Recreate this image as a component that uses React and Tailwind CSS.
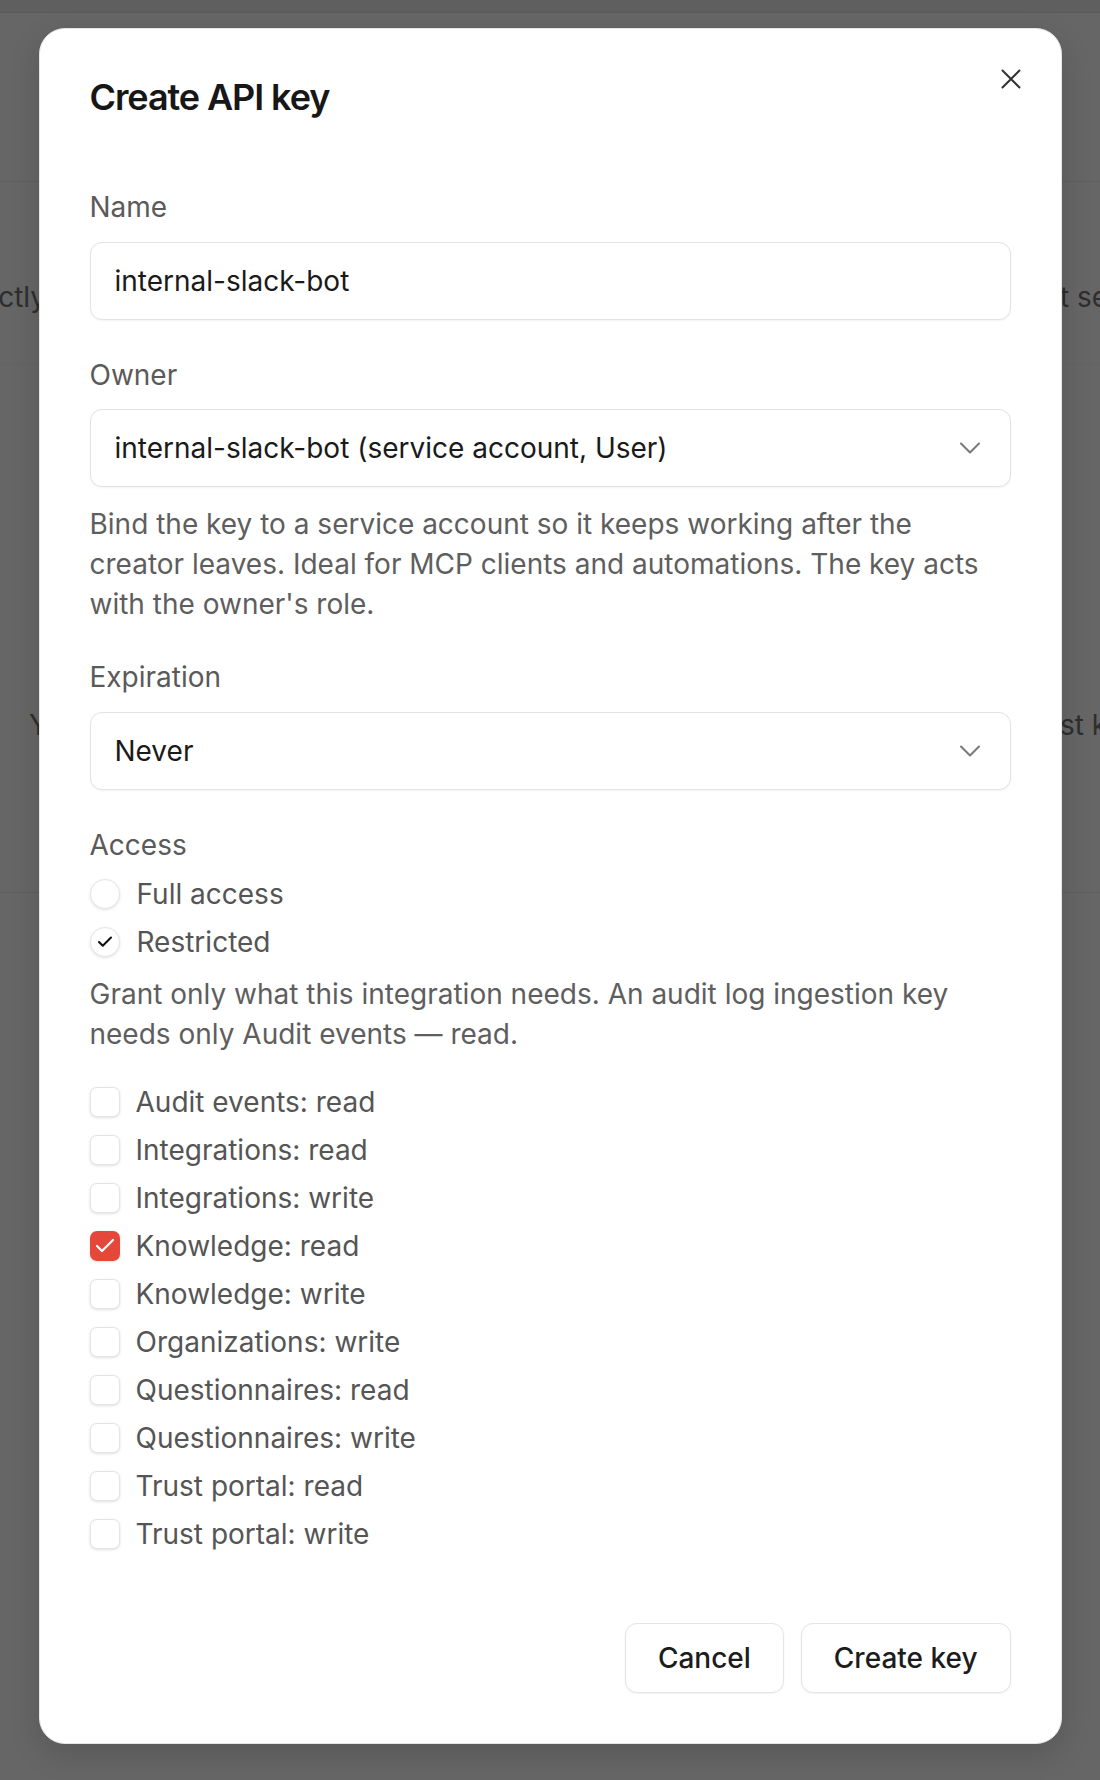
import React from "react";

const permissions = [
	{ id: "audit-read", label: "Audit events: read", checked: false },
	{ id: "integrations-read", label: "Integrations: read", checked: false },
	{ id: "integrations-write", label: "Integrations: write", checked: false },
	{ id: "knowledge-read", label: "Knowledge: read", checked: true },
	{ id: "knowledge-write", label: "Knowledge: write", checked: false },
	{ id: "organizations-write", label: "Organizations: write", checked: false },
	{ id: "questionnaires-read", label: "Questionnaires: read", checked: false },
	{ id: "questionnaires-write", label: "Questionnaires: write", checked: false },
	{ id: "trust-read", label: "Trust portal: read", checked: false },
	{ id: "trust-write", label: "Trust portal: write", checked: false },
];

const Chevron = () => (
	<svg width="36" height="36" viewBox="0 0 24 24" fill="none" stroke="#7a7a7a" strokeWidth="1.4" strokeLinecap="round" strokeLinejoin="round">
		<path d="m6 9 6 6 6-6" />
	</svg>
);

const Check = ({ size, color, width }) => (
	<svg width={size} height={size} viewBox="0 0 24 24" fill="none" stroke={color} strokeWidth={width} strokeLinecap="round" strokeLinejoin="round">
		<path d="M20 6 9 17l-5-5" />
	</svg>
);

const Label = ({ children, className = "" }) => (
	<div className={`text-[28px] leading-[40px] text-[#5a5a5a] ${className}`}>{children}</div>
);

const Field = ({ children, select, className = "" }) => (
	<div className={`flex h-[78px] items-center justify-between rounded-[12px] border border-[#e3e3e3] bg-white pl-[24px] pr-[22px] shadow-[0_1px_2px_rgba(0,0,0,0.05)] ${className}`}>
		<span className="text-[28px] leading-[40px] text-[#1a1a1a]">{children}</span>
		{select && <Chevron />}
	</div>
);

const App = () => {
	return (
		<div className="relative h-[1780px] overflow-hidden bg-[#666666] font-[family-name:Inter,sans-serif]">
			{/* page behind the dialog, dimmed */}
			<div className="h-[13px] border-b border-[#5a5a5a] bg-[#5f5f5f]"></div>
			<div className="h-[169px] border-b border-[#5f5f5f]"></div>
			<div className="flex h-[183px] justify-between border-b border-[#636363] pt-[95px] text-[28px] leading-[40px] text-[#2e2e2e]">
				<div className="flex w-[46px] justify-end overflow-hidden whitespace-nowrap">
					<span className="shrink-0">Install it correctly</span>
				</div>
				<div className="w-[40px] overflow-hidden whitespace-nowrap">
					<span>t set</span>
				</div>
			</div>
			<div className="flex h-[528px] justify-between border-b border-[#5f5f5f] pt-[340px] text-[28px] leading-[40px] text-[#2e2e2e]">
				<div className="w-[80px] overflow-hidden whitespace-nowrap pl-[29px]">
					<span>Your</span>
				</div>
				<div className="w-[40px] overflow-hidden whitespace-nowrap">
					<span>st key</span>
				</div>
			</div>

			{/* dialog */}
			<div className="absolute inset-0 flex justify-center pt-[28px]">
				<div className="relative h-fit w-[1023px] rounded-[26px] border border-[#e6e6e6] bg-white p-[50px] shadow-[0_10px_30px_rgba(0,0,0,0.15)]">
					<h2 className="text-[36px] font-semibold leading-[36px] tracking-[-0.03em] text-[#171717]">
						Create API key
					</h2>
					<button className="absolute right-[40px] top-[40px] flex h-[20px] w-[20px] items-center justify-center">
						<svg width="20" height="20" viewBox="0 0 20 20" fill="none" stroke="#333333" strokeWidth="2" strokeLinecap="round">
							<path d="M1.5 1.5 18.5 18.5M18.5 1.5 1.5 18.5" />
						</svg>
					</button>

					<div className="mt-[72px] flex flex-col">
						<Label>Name</Label>
						<Field className="mt-[15px]">internal-slack-bot</Field>

						<Label className="mt-[35px]">Owner</Label>
						<Field select className="mt-[14px]">
							internal-slack-bot (service account, User)
						</Field>
						<p className="mt-[17px] text-[28px] leading-[40px] text-[#5e5e5e]">
							Bind the key to a service account so it keeps working after the
							creator leaves. Ideal for MCP clients and automations. The key acts
							with the owner's role.
						</p>

						<Label className="mt-[33px]">Expiration</Label>
						<Field select className="mt-[15px]">Never</Field>

						<Label className="mt-[35px]">Access</Label>
						<div className="mt-[9px] flex flex-col gap-[8px]">
							<div className="flex h-[40px] items-center gap-[17px]">
								<div className="h-[30px] w-[30px] rounded-full border border-[#e6e6e6] bg-white shadow-[0_1px_3px_rgba(0,0,0,0.12)]"></div>
								<span className="text-[28px] leading-[40px] text-[#555555]">Full access</span>
							</div>
							<div className="flex h-[40px] items-center gap-[17px]">
								<div className="flex h-[30px] w-[30px] items-center justify-center rounded-full border border-[#e6e6e6] bg-white shadow-[0_1px_3px_rgba(0,0,0,0.12)]">
									<Check size={18} color="#111111" width={2.8} />
								</div>
								<span className="text-[28px] leading-[40px] text-[#555555]">Restricted</span>
							</div>
						</div>
						<p className="mt-[12px] text-[28px] leading-[40px] text-[#5e5e5e]">
							Grant only what this integration needs. An audit log ingestion key
							needs only Audit events — read.
						</p>

						<div className="mt-[28px] flex flex-col gap-[8px]">
							{permissions.map((perm) => (
								<div key={perm.id} className="flex h-[40px] items-center gap-[16px]">
									{perm.checked ? (
										<div className="flex h-[30px] w-[30px] items-center justify-center rounded-[7px] bg-[#e5483b] shadow-[0_1px_3px_rgba(0,0,0,0.12)]">
											<Check size={24} color="#ffffff" width={2.2} />
										</div>
									) : (
										<div className="h-[30px] w-[30px] rounded-[7px] border border-[#e4e4e4] bg-white shadow-[0_1px_3px_rgba(0,0,0,0.12)]"></div>
									)}
									<span className="text-[28px] leading-[40px] text-[#555555]">{perm.label}</span>
								</div>
							))}
						</div>

						<div className="mt-[69px] flex justify-end gap-[17px]">
							<button className="h-[70px] rounded-[12px] border border-[#e4e4e4] bg-white px-[32px] text-[28px] font-medium text-[#1c1c1c] shadow-[0_1px_2px_rgba(0,0,0,0.05)]">
								Cancel
							</button>
							<button className="h-[70px] rounded-[12px] border border-[#e4e4e4] bg-white px-[32px] text-[28px] font-medium text-[#1c1c1c] shadow-[0_1px_2px_rgba(0,0,0,0.05)]">
								Create key
							</button>
						</div>
					</div>
				</div>
			</div>
		</div>
	);
};

export default App;
